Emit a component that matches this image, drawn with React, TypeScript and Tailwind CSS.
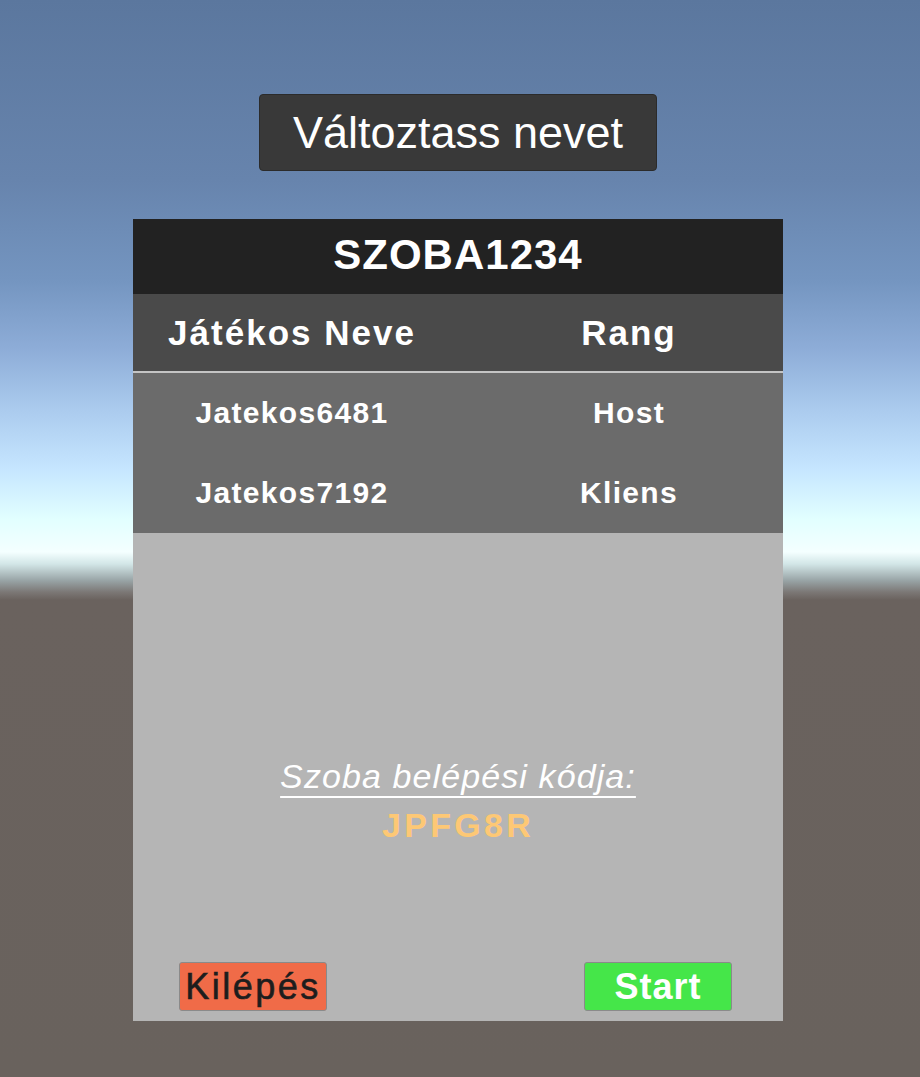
const players = [
  { name: "Jatekos6481", rank: "Host" },
  { name: "Jatekos7192", rank: "Kliens" },
];

export default function App() {
  return (
    <div className="h-[1077px] w-full overflow-hidden flex flex-col items-center pt-[94px] pr-[4px] font-['Liberation_Sans',Arial,sans-serif] bg-[linear-gradient(to_bottom,#5b779e_0px,#6784ad_180px,#7495c0_280px,#8eadd8_350px,#abcbee_410px,#c6e6ff_470px,#e2ffff_520px,#f4ffff_552px,#d2e6e7_564px,#9aa6a8_580px,#7c7876_592px,#6a625e_600px,#69625d_100%)]">
      <button
        type="button"
        className="w-[398px] h-[77px] bg-[#393939] border border-[#2b2b2b] rounded-[4px] text-white text-[45px] leading-none"
      >
        Változtass nevet
      </button>

      <div className="mt-[48px] w-[650px] h-[802px] flex flex-col bg-[#b5b5b5]">
        <div className="h-[75px] shrink-0 bg-[#222222] flex items-center justify-center pb-[4px] text-white font-bold text-[42px] tracking-[1px] leading-none">
          SZOBA1234
        </div>

        <div className="h-[79px] shrink-0 bg-[#4a4a4a] flex items-center text-white font-bold text-[35px] tracking-[2px] leading-none border-b-2 border-[#c4c4c4]">
          <div className="w-[318px] text-center">Játékos Neve</div>
          <div className="ml-[24px] w-[308px] text-center">Rang</div>
        </div>

        <div className="bg-[#6b6b6b] shrink-0 h-[160px] flex flex-col">
          {players.map((p) => (
            <div
              key={p.name}
              className="h-[80px] flex items-center text-white font-bold text-[30px] tracking-[1.3px] leading-none"
            >
              <div className="w-[318px] text-center">{p.name}</div>
              <div className="ml-[24px] w-[308px] text-center">{p.rank}</div>
            </div>
          ))}
        </div>

        <div className="flex-1 flex flex-col items-center pt-[226px]">
          <div className="h-[34px] text-[34px] leading-none italic text-white tracking-[1.1px] underline decoration-2 underline-offset-[8px]">
            Szoba belépési kódja:
          </div>
          <div className="mt-[15px] h-[34px] text-[34px] leading-none font-bold text-[#fdc875] tracking-[3.3px]">
            JPFG8R
          </div>
          <div className="mt-auto mb-[10px] w-full flex justify-between pl-[46px] pr-[51px]">
            <button
              type="button"
              className="w-[148px] h-[49px] bg-[#f06b48] border border-[#8a8a8a] rounded-[3px] text-[#1d1d1d] text-[36px] tracking-[2.5px] leading-none [-webkit-text-stroke:0.6px_#1d1d1d]"
            >
              Kilépés
            </button>
            <button
              type="button"
              className="w-[148px] h-[49px] bg-[#45e649] border border-[#8a8a8a] rounded-[3px] text-white font-bold text-[36px] tracking-[1px] leading-none"
            >
              Start
            </button>
          </div>
        </div>
      </div>
    </div>
  );
}
